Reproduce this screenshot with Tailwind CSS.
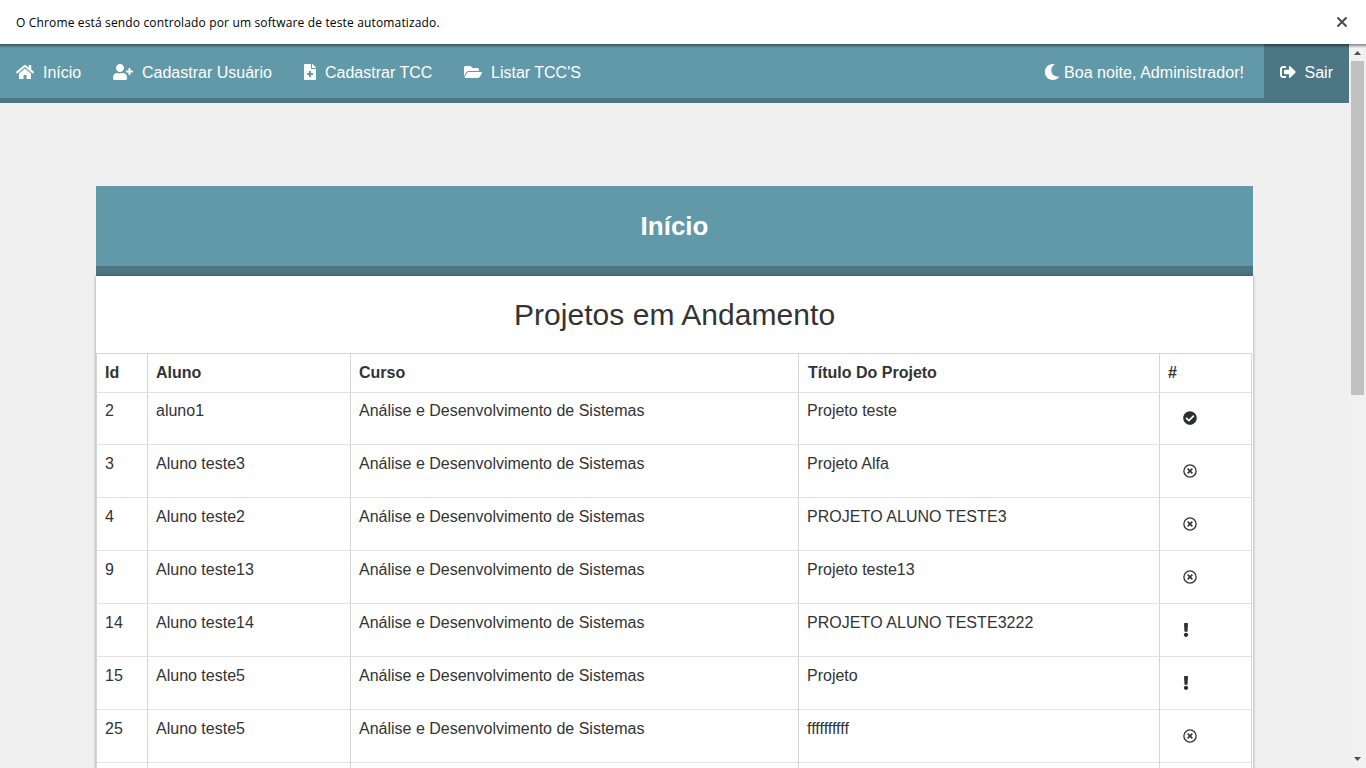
<!DOCTYPE html>
<html lang="pt-BR">
<head>
<meta charset="utf-8">
<title>Início</title>
<script src="https://cdn.jsdelivr.net/npm/@tailwindcss/browser@4"></script>
</head>
<body class="h-[768px] overflow-hidden flex flex-col bg-[#f0f0f0] font-['Liberation_Sans',Arial,sans-serif] text-[16px] leading-6 text-[#333]">
<svg class="hidden">
  <symbol id="home" viewBox="0 0 576 512"><path d="M280.37 148.26L96 300.11V464a16 16 0 0 0 16 16l112.06-.29a16 16 0 0 0 15.92-16V368a16 16 0 0 1 16-16h64a16 16 0 0 1 16 16v95.64a16 16 0 0 0 16 16.05L464 480a16 16 0 0 0 16-16V300L295.67 148.26a12.19 12.19 0 0 0-15.3 0zM571.6 251.47L488 182.56V44.05a12 12 0 0 0-12-12h-56a12 12 0 0 0-12 12v72.61L318.47 43a48 48 0 0 0-61 0L4.34 251.47a12 12 0 0 0-1.6 16.9l25.5 31A12 12 0 0 0 45.15 301l235.22-193.74a12.19 12.19 0 0 1 15.3 0L530.9 301a12 12 0 0 0 16.9-1.6l25.5-31a12 12 0 0 0-1.7-16.93z"/></symbol>
  <symbol id="user-plus" viewBox="0 0 640 512"><path d="M624 208h-64v-64c0-8.8-7.2-16-16-16h-32c-8.8 0-16 7.2-16 16v64h-64c-8.8 0-16 7.2-16 16v32c0 8.8 7.2 16 16 16h64v64c0 8.8 7.2 16 16 16h32c8.8 0 16-7.2 16-16v-64h64c8.8 0 16-7.2 16-16v-32c0-8.8-7.2-16-16-16zm-400 48c70.7 0 128-57.3 128-128S294.7 0 224 0 96 57.3 96 128s57.3 128 128 128zm89.6 32h-16.7c-22.2 10.2-46.9 16-72.9 16s-50.6-5.8-72.9-16h-16.7C60.2 288 0 348.2 0 422.4V464c0 26.5 21.5 48 48 48h352c26.5 0 48-21.5 48-48v-41.6c0-74.2-60.2-134.4-134.4-134.4z"/></symbol>
  <symbol id="file" viewBox="0 0 384 512"><path d="M377 105L279.1 7c-4.5-4.5-10.6-7-17-7H256v128h128v-6.1c0-6.3-2.5-12.4-7-16.9zm-153 31V0H24C10.7 0 0 10.7 0 24v464c0 13.3 10.7 24 24 24h336c13.3 0 24-10.7 24-24V160H248c-13.2 0-24-10.8-24-24zm64 160v48c0 4.4-3.6 8-8 8h-56v56c0 4.4-3.6 8-8 8h-48c-4.4 0-8-3.6-8-8v-56h-56c-4.4 0-8-3.6-8-8v-48c0-4.4 3.6-8 8-8h56v-56c0-4.400 3.600-8 8-8h48c4.400 0 8 3.600 8 8v56h56c4.400 0 8 3.600 8 8z"/></symbol>
  <symbol id="folder" viewBox="0 0 576 512"><path d="M572.694 292.093L500.27 416.248A63.997 63.997 0 0 1 444.989 448H45.025c-18.523 0-30.064-20.093-20.731-36.093l72.424-124.155A64 64 0 0 1 152 256h399.964c18.523 0 30.064 20.093 20.73 36.093zM152 224h328v-48c0-26.51-21.49-48-48-48H272l-64-64H48C21.49 64 0 85.49 0 112v278.046l69.077-118.418C86.214 242.25 117.989 224 152 224z"/></symbol>
  <symbol id="moon" viewBox="0 0 512 512"><path d="M283.211 512c78.962 0 151.079-35.925 198.857-94.792 7.068-8.708-.639-21.43-11.562-19.35-124.203 23.654-238.262-71.576-238.262-196.954 0-72.222 38.662-138.635 101.498-174.394 9.686-5.512 7.25-20.197-3.756-22.23A258.156 258.156 0 0 0 283.211 0c-141.309 0-256 114.511-256 256 0 141.309 114.511 256 256 256z"/></symbol>
  <symbol id="sign-out" viewBox="0 0 512 512"><path d="M497 273L329 441c-15 15-41 4.5-41-17v-96H152c-13.3 0-24-10.7-24-24v-96c0-13.3 10.7-24 24-24h136V88c0-21.4 25.9-32 41-17l168 168c9.3 9.4 9.3 24.6 0 34zM192 436v-40c0-6.6-5.4-12-12-12H96c-17.7 0-32-14.3-32-32V160c0-17.7 14.3-32 32-32h84c6.6 0 12-5.4 12-12V76c0-6.6-5.4-12-12-12H96c-53 0-96 43-96 96v192c0 53 43 96 96 96h84c6.6 0 12-5.4 12-12z"/></symbol>
  <symbol id="check" viewBox="0 0 512 512"><path d="M504 256c0 136.967-111.033 248-248 248S8 392.967 8 256 119.033 8 256 8s248 111.033 248 248zM227.314 387.314l184-184c6.248-6.248 6.248-16.379 0-22.627l-22.627-22.627c-6.248-6.249-16.379-6.249-22.628 0L216 308.118l-70.059-70.059c-6.248-6.248-16.379-6.248-22.628 0l-22.627 22.627c-6.248 6.248-6.248 16.379 0 22.627l104 104c6.249 6.249 16.379 6.249 22.628.001z"/></symbol>
  <symbol id="times" viewBox="0 0 512 512"><circle cx="256" cy="256" r="224" fill="none" stroke="currentColor" stroke-width="48"/><path d="M170 170L342 342M342 170L170 342" fill="none" stroke="currentColor" stroke-width="56"/></symbol>
  <symbol id="excl" viewBox="0 0 192 512"><path d="M176 432c0 44.112-35.888 80-80 80s-80-35.888-80-80 35.888-80 80-80 80 35.888 80 80zM25.26 25.199l13.6 272C39.499 309.972 50.041 320 62.83 320h66.34c12.789 0 23.331-10.028 23.97-22.801l13.6-272C167.425 11.49 156.496 0 142.77 0H49.23C35.504 0 24.575 11.49 25.26 25.199z"/></symbol>
</svg>

<div class="h-11 shrink-0 bg-white flex items-center justify-between pl-4 pr-[18px] text-black">
  <span class="font-['Open_Sans',sans-serif] text-[12px] tracking-[0.15px] whitespace-nowrap pt-0.5">O Chrome está sendo controlado por um software de teste automatizado.</span>
  <svg class="size-3" viewBox="0 0 12 12" fill="none" stroke="#4a4a4a" stroke-width="2"><path d="M1.5 1.5l9 9M10.500 1.500l-9 9"/></svg>
</div>

<div class="relative flex flex-1 min-h-0">
  <div class="absolute inset-x-0 top-0 h-1 bg-linear-to-b from-black/45 to-transparent"></div>
  <div class="w-[1349px] flex flex-col overflow-hidden">
    <nav class="h-[59px] shrink-0 bg-[#6299a9] border-b-[5px] border-[#4c7683] flex text-white fill-white whitespace-nowrap [&_span]:pt-0.5">
      <div class="flex h-14 items-center pl-4">
        <a class="flex items-center w-[97px]"><svg class="w-[18px] h-4 mr-[9px]"><use href="#home"/></svg><span>Início</span></a>
        <a class="flex items-center w-[191px]"><svg class="w-5 h-4 mr-[9px]"><use href="#user-plus"/></svg><span>Cadastrar Usuário</span></a>
        <a class="flex items-center w-[160px]"><svg class="w-3 h-4 mr-[9px]"><use href="#file"/></svg><span>Cadastrar TCC</span></a>
        <a class="flex items-center"><svg class="w-[18px] h-4 mr-[9px]"><use href="#folder"/></svg><span>Listar TCC'S</span></a>
      </div>
      <div class="flex h-14 items-center ml-auto mr-5"><svg class="size-4 mr-1"><use href="#moon"/></svg><span class="tracking-[0.05px]">Boa noite, Administrador!</span></div>
      <a class="w-[85px] h-[54px] pt-0.5 flex items-center pl-[15.500px] bg-[#4c7683]"><svg class="size-4 mr-[9px]"><use href="#sign-out"/></svg><span>Sair</span></a>
    </nav>

    <main class="w-[1157px] ml-24 mt-[83px] flex-1 min-h-0 flex flex-col">
      <h1 class="h-[90px] shrink-0 bg-[#6299a9] border-b-10 border-[#4c7683] flex items-center justify-center text-white text-[26px] font-bold">Início</h1>
      <section class="flex-1 bg-white shadow-[0_0_3px_rgba(0,0,0,0.4)]">
        <h2 class="h-[77px] flex items-center justify-center text-[30px] tracking-[0.05px]">Projetos em Andamento</h2>
        <table class="w-[1156px] table-fixed border-separate border-spacing-0 border-r border-[#d5d6d9] text-left [&_th]:border-l [&_th]:border-t [&_td]:border-l [&_td]:border-t [&_th]:border-[#d5d6d9] [&_td]:border-l-[#d5d6d9] [&_td]:border-t-[#e2e2e5] [&_th]:px-2 [&_td]:px-2 [&_td]:pt-[7px] [&_td]:align-top [&_tr]:h-[53px] whitespace-nowrap">
          <colgroup><col class="w-[51px]"><col class="w-[203px]"><col class="w-[448px]"><col class="w-[361px]"><col class="w-[92px]"></colgroup>
          <thead><tr class="h-[39px]!"><th>Id</th><th>Aluno</th><th>Curso</th><th class="pl-[9px]!">Título Do Projeto</th><th>#</th></tr></thead>
          <tbody class="fill-[#2b2d30] [&_svg]:ml-[15px] [&_svg]:mt-3">
            <tr class="h-[52px]! [&_td]:pt-1.5!"><td>2</td><td>aluno1</td><td>Análise e Desenvolvimento de Sistemas</td><td>Projeto teste</td><td><svg class="size-[14px]"><use href="#check"/></svg></td></tr>
            <tr><td>3</td><td>Aluno teste3</td><td>Análise e Desenvolvimento de Sistemas</td><td>Projeto Alfa</td><td><svg class="size-[14px]"><use href="#times"/></svg></td></tr>
            <tr><td>4</td><td>Aluno teste2</td><td>Análise e Desenvolvimento de Sistemas</td><td class="tracking-[0.05px]">PROJETO ALUNO TESTE3</td><td><svg class="size-[14px]"><use href="#times"/></svg></td></tr>
            <tr><td>9</td><td>Aluno teste13</td><td>Análise e Desenvolvimento de Sistemas</td><td>Projeto teste13</td><td><svg class="size-[14px]"><use href="#times"/></svg></td></tr>
            <tr><td>14</td><td>Aluno teste14</td><td>Análise e Desenvolvimento de Sistemas</td><td class="tracking-[0.05px]">PROJETO ALUNO TESTE3222</td><td><svg class="w-1.5 h-[14px]"><use href="#excl"/></svg></td></tr>
            <tr><td>15</td><td>Aluno teste5</td><td>Análise e Desenvolvimento de Sistemas</td><td>Projeto</td><td><svg class="w-1.5 h-[14px]"><use href="#excl"/></svg></td></tr>
            <tr><td>25</td><td>Aluno teste5</td><td>Análise e Desenvolvimento de Sistemas</td><td>ffffffffff</td><td><svg class="size-[14px]"><use href="#times"/></svg></td></tr>
            <tr><td></td><td></td><td></td><td></td><td></td></tr>
          </tbody>
        </table>
      </section>
    </main>
  </div>

  <!-- scrollbar -->
  <div class="w-[17px] bg-[#f1f1f1] flex flex-col items-center">
    <svg class="w-[17px] h-[17px] shrink-0" viewBox="0 0 17 17"><path d="M5 11h7L8.500 7z" fill="#505050"/></svg>
    <div class="w-[13px] h-[334px] bg-[#c1c1c1]"></div>
    <svg class="w-[17px] h-[17px] mt-auto shrink-0" viewBox="0 0 17 17"><path d="M5 6h7l-3.500 4z" fill="#505050"/></svg>
  </div>
</div>
</body>
</html>
